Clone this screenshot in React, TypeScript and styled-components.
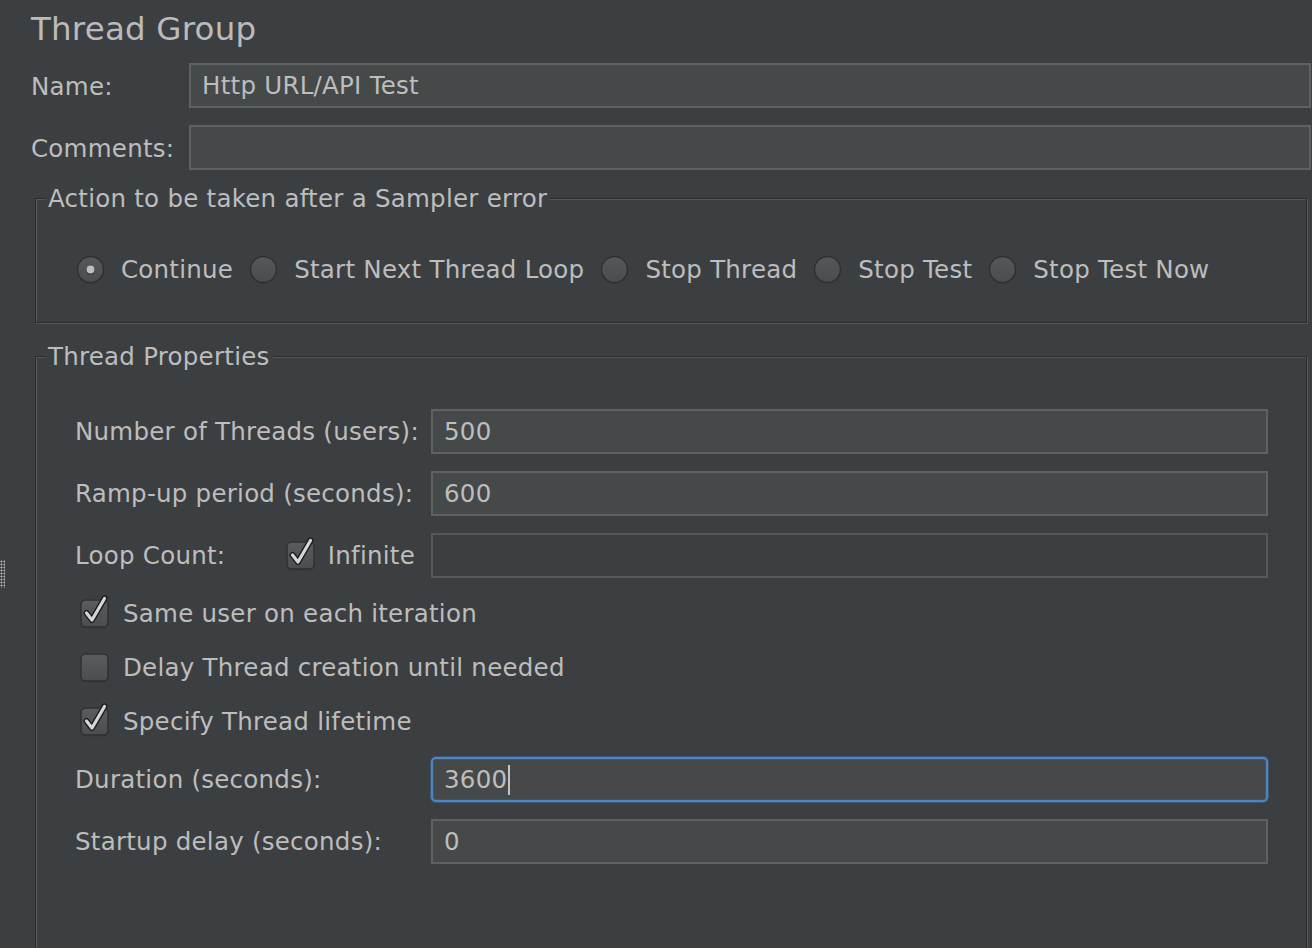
import React from 'react';
import styled, { createGlobalStyle } from 'styled-components';

const GlobalStyle = createGlobalStyle`
  html, body {
    margin: 0;
    padding: 0;
    background: #3c3f41;
  }
  body {
    font-family: 'DejaVu Sans', 'Liberation Sans', sans-serif;
    color: #bdbdbd;
  }
`;

const Page = styled.div`
  position: relative;
  width: 1312px;
  height: 948px;
  overflow: hidden;
  box-sizing: border-box;
  padding: 9px 1px 0 31px;
  background: #3c3f41;
  font-size: 24.5px;
  letter-spacing: 0.25px;
`;

const Title = styled.h1`
  margin: 0;
  font-size: 32.5px;
  font-weight: normal;
  line-height: 40px;
  letter-spacing: 0.2px;
  color: #bbbbbb;
`;

const HeaderGrid = styled.div`
  display: grid;
  grid-template-columns: 158px 1fr;
  row-gap: 17px;
  margin-top: 14px;
  align-items: center;
`;

const Label = styled.div<{ $nudge?: number }>`
  line-height: 28px;
  white-space: nowrap;
  padding-top: ${(p) => p.$nudge ?? 0}px;
`;

const Field = styled.div<{ $disabled?: boolean; $focused?: boolean }>`
  box-sizing: border-box;
  height: 45px;
  display: flex;
  align-items: center;
  padding-left: 11px;
  background: ${(p) => (p.$disabled ? '#3c3f41' : '#45494a')};
  border: 2px solid ${(p) => (p.$focused ? '#4f84be' : p.$disabled ? '#565859' : '#5f6263')};
  border-radius: ${(p) => (p.$focused ? '5px' : '0')};
  box-shadow: ${(p) =>
    p.$focused ? '0 0 0 1px rgba(64, 105, 155, 0.6), inset 0 0 0 1px rgba(64, 105, 155, 0.35)' : 'none'};
  line-height: 28px;
  white-space: nowrap;
`;

const Caret = styled.span`
  display: inline-block;
  width: 2px;
  height: 30px;
  margin-left: 1px;
  background: #c4c4c4;
`;

const Group = styled.fieldset<{ $gap: number }>`
  margin: ${(p) => p.$gap}px 4px 0 4px;
  padding: 0;
  border: 1px solid #292b2d;
  box-shadow: inset 1px 1px 0 #56595b, 1px 1px 0 #56595b;
  min-width: 0;
`;

const Legend = styled.legend`
  margin-left: 9px;
  padding: 2px 3px 0;
  line-height: 28px;
  background: #3c3f41;
`;

const GroupBody = styled.div<{ $pad: string }>`
  padding: ${(p) => p.$pad};
`;

const RadioRow = styled.div`
  display: flex;
  align-items: center;
  gap: 16px;
`;

const Option = styled.div<{ $gap?: number }>`
  display: flex;
  align-items: center;
  gap: ${(p) => p.$gap ?? 16}px;
  line-height: 28px;
  white-space: nowrap;
`;

const PropsList = styled.div`
  display: flex;
  flex-direction: column;
  gap: 17px;
`;

const PropRow = styled.div`
  display: grid;
  grid-template-columns: 356px 1fr;
  align-items: center;
`;

const LoopLabel = styled.div`
  display: flex;
  align-items: center;
  justify-content: space-between;
  padding-right: 16px;
  line-height: 28px;
`;

const CheckRow = styled.div`
  height: 37px;
  display: flex;
  align-items: center;
  padding-left: 5px;
`;

const Grip = styled.div`
  position: absolute;
  left: 0;
  top: 560px;
  width: 5px;
  height: 28px;
  background-image: radial-gradient(circle, #b5b5b5 0.9px, transparent 1.1px);
  background-size: 3px 3px;
`;

function Radio({ checked }: { checked?: boolean }) {
  return (
    <svg width="29" height="30" viewBox="0 0 29 30">
      <defs>
        <linearGradient id="rg" x1="0" y1="0" x2="0" y2="1">
          <stop offset="0" stopColor="#55585a" />
          <stop offset="1" stopColor="#4a4d4f" />
        </linearGradient>
      </defs>
      <circle cx="14.5" cy="15.5" r="13.5" fill="#37393b" />
      <circle cx="14.5" cy="14.5" r="13.5" fill="#2c2e30" />
      <circle cx="14.5" cy="14.5" r="12.3" fill="url(#rg)" />
      {checked && (
        <>
          <circle cx="14.5" cy="15" r="4.6" fill="#2a2c2e" />
          <circle cx="14.5" cy="14.5" r="4" fill="#bdbdbd" />
        </>
      )}
    </svg>
  );
}

function Check({ checked }: { checked?: boolean }) {
  return (
    <svg width="29" height="30" viewBox="0 0 29 30" style={{ overflow: 'visible' }}>
      <defs>
        <linearGradient id="cg" x1="0" y1="0" x2="0" y2="1">
          <stop offset="0" stopColor="#5a5d5f" />
          <stop offset="1" stopColor="#4b4e50" />
        </linearGradient>
      </defs>
      <rect x="0.5" y="1.5" width="28" height="28" rx="5" fill="#37393b" />
      <rect x="0.5" y="0.5" width="28" height="28" rx="5" fill="#2c2e30" />
      <rect x="1.7" y="1.7" width="25.6" height="25.6" rx="4" fill="url(#cg)" />
      {checked && (
        <>
          <path
            d="M6.5 14 L12 21 L24.5 -0.5"
            fill="none"
            stroke="#1c1d1f"
            strokeWidth="6"
            strokeLinecap="round"
            strokeLinejoin="round"
          />
          <path
            d="M6.5 14 L12 21 L24.5 -0.5"
            fill="none"
            stroke="#d6d6d6"
            strokeWidth="3.2"
            strokeLinecap="round"
            strokeLinejoin="round"
          />
        </>
      )}
    </svg>
  );
}

const actions = [
  { label: 'Continue', checked: true },
  { label: 'Start Next Thread Loop' },
  { label: 'Stop Thread' },
  { label: 'Stop Test' },
  { label: 'Stop Test Now' },
];

export default function App() {
  return (
    <>
      <GlobalStyle />
      <Page>
        <Title>Thread Group</Title>
        <HeaderGrid>
          <Label $nudge={2}>Name:</Label>
          <Field>Http URL/API Test</Field>
          <Label $nudge={2}>Comments:</Label>
          <Field />
        </HeaderGrid>

        <Group $gap={13}>
          <Legend>Action to be taken after a Sampler error</Legend>
          <GroupBody $pad="42px 0 37px 40px">
            <RadioRow>
              {actions.map((a) => (
                <Option key={a.label}>
                  <Radio checked={a.checked} />
                  {a.label}
                </Option>
              ))}
            </RadioRow>
          </GroupBody>
        </Group>

        <Group $gap={18}>
          <Legend>Thread Properties</Legend>
          <GroupBody $pad="38px 38px 120px 39px">
            <PropsList>
              <PropRow>
                <Label>Number of Threads (users):</Label>
                <Field>500</Field>
              </PropRow>
              <PropRow>
                <Label>Ramp-up period (seconds):</Label>
                <Field>600</Field>
              </PropRow>
              <PropRow>
                <LoopLabel>
                  <span>Loop Count:</span>
                  <Option $gap={13}>
                    <Check checked />
                    Infinite
                  </Option>
                </LoopLabel>
                <Field $disabled />
              </PropRow>
              <CheckRow>
                <Option $gap={14}>
                  <Check checked />
                  Same user on each iteration
                </Option>
              </CheckRow>
              <CheckRow>
                <Option $gap={14}>
                  <Check />
                  Delay Thread creation until needed
                </Option>
              </CheckRow>
              <CheckRow>
                <Option $gap={14}>
                  <Check checked />
                  Specify Thread lifetime
                </Option>
              </CheckRow>
              <PropRow>
                <Label>Duration (seconds):</Label>
                <Field $focused>
                  3600
                  <Caret />
                </Field>
              </PropRow>
              <PropRow>
                <Label>Startup delay (seconds):</Label>
                <Field>0</Field>
              </PropRow>
            </PropsList>
          </GroupBody>
        </Group>
        <Grip />
      </Page>
    </>
  );
}
